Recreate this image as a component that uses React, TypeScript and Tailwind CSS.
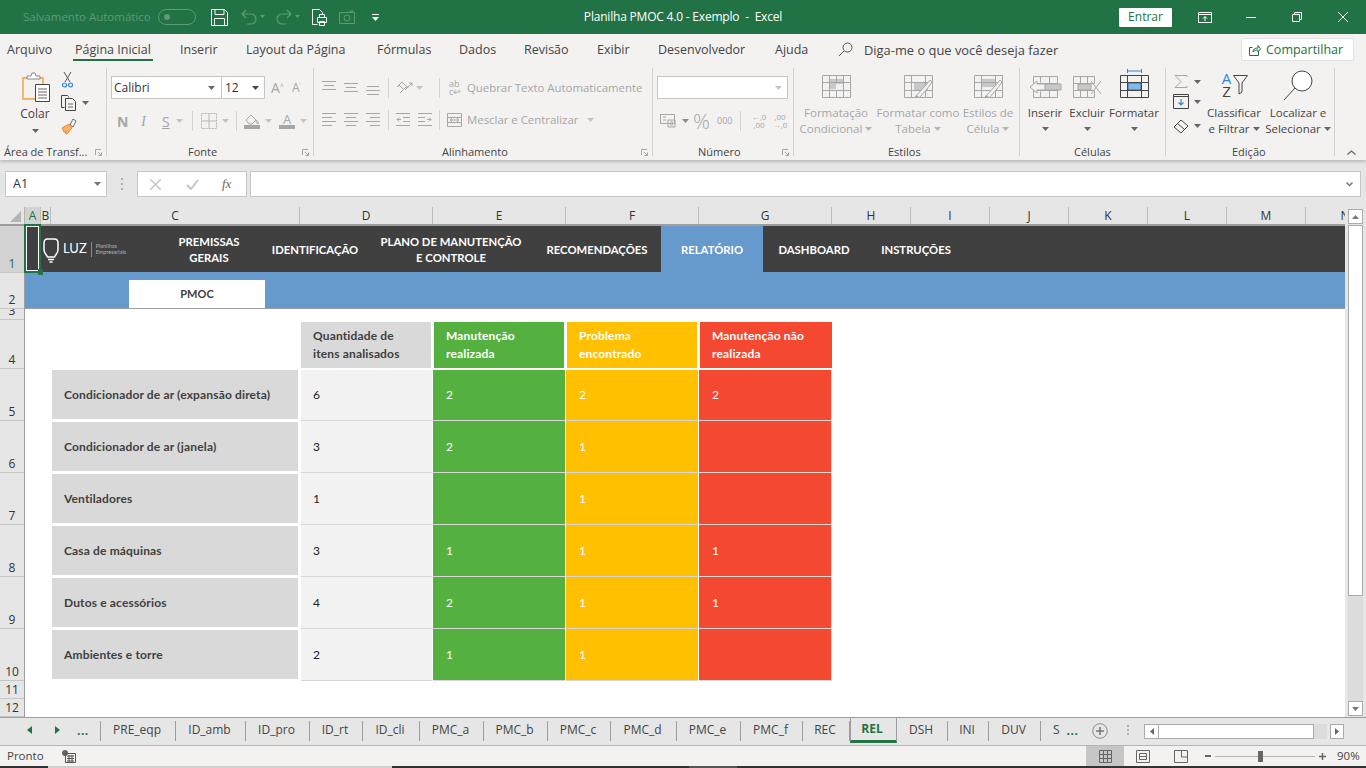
import React from "react";

type SP = { w: number; h: number; className?: string; children?: React.ReactNode };
const S = ({ w, h, className, children }: SP) => (
  <svg width={w} height={h} viewBox={`0 0 ${w} ${h}`} fill="none" className={`shrink-0 ${className ?? ""}`}>
    {children}
  </svg>
);
const Caret = ({ c = "#8a8a8a", className }: { c?: string; className?: string }) => (
  <S w={7} h={4} className={className}>
    <path d="M0 0h7L3.5 4z" fill={c} />
  </S>
);
const Launcher = ({ className }: { className?: string }) => (
  <S w={7} h={7} className={className}>
    <path d="M.5 6V.5H6M3 3l3.5 3.5M6.5 3.5v3h-3" stroke="#a6a6a6" />
  </S>
);
const Sep = ({ className }: { className?: string }) => <div className={`w-px h-[20px] bg-[#d2d2d2] shrink-0 ${className ?? ""}`} />;

const Lines = ({ kind }: { kind: "t" | "m" | "b" | "l" | "c" | "r" | "il" | "ir" }) => {
  const c = "#a6a6a6";
  const set: Record<string, string> = {
    t: "M0 1.5h14M2 5.5h10M0 9.5h14",
    m: "M0 3.5h14M2 7.5h10M0 11.5h14",
    b: "M1 6.5h12M0 10.5h14M1 14.5h12",
    l: "M0 1.5h14M0 5.5h10M0 9.5h14M0 13.5h10",
    c: "M0 1.5h14M2 5.5h10M0 9.5h14M2 13.5h10",
    r: "M0 1.5h14M4 5.5h10M0 9.5h14M4 13.5h10",
    il: "M0 1.5h14M7 5.5h7M7 9.5h7M0 13.5h14M5 7.5H1M3 5.5l-2 2 2 2",
    ir: "M0 1.5h14M0 5.5h7M0 9.5h7M0 13.5h14M9 7.5h4M11 5.5l2 2-2 2",
  };
  return (
    <S w={14} h={16}>
      <path d={set[kind]} stroke={c} />
    </S>
  );
};

const TableIcon = ({ variant }: { variant: "fc" | "ft" | "ec" | "ins" | "del" | "fmt" }) => {
  const g = variant === "fmt" ? "#444" : "#a6a6a6";
  if (variant === "ins")
    return (
      <S w={33} h={22}>
        <path d="M4.500.5h24v21h-24z" stroke="#a6a6a6" />
        <path d="M11.500.5v6M20.500.5v21M11.500 15.500v6M4.500 7.500h24M4.500 14.500h24" stroke="#a6a6a6" />
        <path d="M11 8h21v6H11z" fill="#c8c8c8" stroke="#a6a6a6" />
        <path d="M1 11l7-6v3h8v6H8v3z" fill="#f3f2f1" stroke="#a6a6a6" />
      </S>
    );
  if (variant === "del")
    return (
      <S w={29} h={22}>
        <path d="M.5.5h21v7h-21zM.5 14.500h21v7H.5z" stroke="#a6a6a6" />
        <path d="M7.500.5v7M14.500.5v7M7.500 14.500v7M14.500 14.500v7M.5 7.500v7" stroke="#a6a6a6" />
        <path d="M5 8h13v6H5z" fill="#c8c8c8" stroke="#a6a6a6" />
        <path d="M18 5l10 13M28 5L18 18" stroke="#a6a6a6" />
      </S>
    );
  return (
    <S w={29} h={23}>
      {variant === "fc" && <path d="M7 4h14v5h-7v5H7z" fill="#c8c8c8" />}
      {variant === "ft" && <path d="M10 8h14v7H10z" fill="#c8c8c8" />}
      {variant === "ec" && <path d="M8 4h14v8H8z" fill="#c8c8c8" />}
      {variant === "fmt" && <path d="M8 8h13v7H8z" fill="#82b9ea" stroke="#1f6fb8" />}
      <path d="M.5.5h28v22H.5zM.5 7.500h28M.5 15.500h28M7.500.5v22M21.500.5v22" stroke={g} />
      {variant === "fc" && <path d="M14.500.5v7M14.500 15.500v7" stroke={g} />}
      {(variant === "ft" || variant === "ec") && (
        <g>
          <path d="M12 21l9-10 5-6 2 2-5 7-8 9z" fill="#f3f2f1" stroke="#a6a6a6" />
          <path d="M8 23c2 0 3-1 4-3l3 2c-1 2-4 2-7 1z" fill="#a6a6a6" />
        </g>
      )}
    </S>
  );
};

const BigBtn = ({ w, children, l1, l2, dis }: { w: string; children: React.ReactNode; l1: string; l2?: string; dis?: boolean }) => (
  <div className={`flex flex-col items-center shrink-0 ${w} ${dis ? "text-[#a6a6a6]" : "text-[#444444]"}`}>
    <div className="h-[30px] flex items-end justify-center">{children}</div>
    <div className="h-[16px] mt-[7px] leading-[16px] whitespace-nowrap">{l1}</div>
    <div className="h-[16px] leading-[16px] whitespace-nowrap flex items-center gap-[3px]">
      {l2}
      <Caret c={dis ? "#b5b5b5" : "#666"} />
    </div>
  </div>
);

const GroupLabel = ({ text, launcher, textClass }: { text: string; launcher?: boolean; textClass?: string }) => (
  <div className="absolute bottom-[-4px] left-0 right-0 h-[16px] leading-[16px] flex items-center">
    <span className={`text-[#444444] text-[11px] whitespace-nowrap ${textClass ?? ""}`}>{text}</span>
    {launcher && <Launcher className="absolute right-[4px] top-[5px]" />}
  </div>
);

const ribbonTabs = [
  { t: "Arquivo", w: "w-[68px]" },
  { t: "Página Inicial", w: "w-[105px]", active: true },
  { t: "Inserir", w: "w-[66px]" },
  { t: "Layout da Página", w: "w-[131px]" },
  { t: "Fórmulas", w: "w-[82px]" },
  { t: "Dados", w: "w-[65px]" },
  { t: "Revisão", w: "w-[73px]" },
  { t: "Exibir", w: "w-[61px]" },
  { t: "Desenvolvedor", w: "w-[117px]" },
  { t: "Ajuda", w: "w-[63px]" },
];

const cols = [
  { t: "A", w: "w-[16px]", active: true },
  { t: "B", w: "w-[10px]" },
  { t: "C", w: "w-[249px]" },
  { t: "D", w: "w-[133px]" },
  { t: "E", w: "w-[133px]" },
  { t: "F", w: "w-[133px]" },
  { t: "G", w: "w-[133px]" },
  { t: "H", w: "w-[79px]" },
  { t: "I", w: "w-[79px]" },
  { t: "J", w: "w-[79px]" },
  { t: "K", w: "w-[79px]" },
  { t: "L", w: "w-[79px]" },
  { t: "M", w: "w-[79px]" },
  { t: "N", w: "w-[79px]" },
];

const rowsH = [
  { t: "1", h: "h-[47px]", active: true },
  { t: "2", h: "h-[36px]" },
  { t: "3", h: "h-[11px]" },
  { t: "4", h: "h-[49px]" },
  { t: "5", h: "h-[52px]" },
  { t: "6", h: "h-[52px]" },
  { t: "7", h: "h-[52px]" },
  { t: "8", h: "h-[52px]" },
  { t: "9", h: "h-[52px]" },
  { t: "10", h: "h-[52px]" },
  { t: "11", h: "h-[18px]" },
  { t: "12", h: "h-[18px]" },
];

const data: [string, string, string, string, string][] = [
  ["Condicionador de ar (expansão direta)", "6", "2", "2", "2"],
  ["Condicionador de ar (janela)", "3", "2", "1", ""],
  ["Ventiladores", "1", "", "1", ""],
  ["Casa de máquinas", "3", "1", "1", "1"],
  ["Dutos e acessórios", "4", "2", "1", "1"],
  ["Ambientes e torre", "2", "1", "1", ""],
];

const tabs = [
  { t: "PRE_eqp", w: "w-[75px]" },
  { t: "ID_amb", w: "w-[70px]" },
  { t: "ID_pro", w: "w-[64px]" },
  { t: "ID_rt", w: "w-[53px]" },
  { t: "ID_cli", w: "w-[57px]" },
  { t: "PMC_a", w: "w-[64px]" },
  { t: "PMC_b", w: "w-[64px]" },
  { t: "PMC_c", w: "w-[63px]" },
  { t: "PMC_d", w: "w-[66px]" },
  { t: "PMC_e", w: "w-[64px]" },
  { t: "PMC_f", w: "w-[62px]" },
  { t: "REC", w: "w-[47px]" },
];
const tabs2 = [
  { t: "DSH", w: "w-[51px]" },
  { t: "INI", w: "w-[41px]" },
  { t: "DUV", w: "w-[52px]" },
];

const NavItem = ({ w, children, active }: { w: string; children: React.ReactNode; active?: boolean }) => (
  <div className={`${w} shrink-0 h-full flex items-center justify-center text-center leading-[16px] pt-[2px] text-[11.300px] ${active ? "bg-[#6699cc]" : ""}`}>
    <span>{children}</span>
  </div>
);

export default function App() {
  return (
    <div className="w-[1366px] h-[768px] overflow-hidden flex flex-col bg-[#e6e6e6] text-[12px] text-[#444444] font-['Open_Sans','Noto_Sans',sans-serif]">
      {/* Title bar */}
      <div className="h-[34px] bg-[#217346] flex items-center shrink-0">
        <div className="w-[500px] flex items-center pl-[23px]">
          <span className="text-[11.500px] text-[#5c9a7a] w-[135px] whitespace-nowrap">Salvamento Automático</span>
          <div className="w-[38px] h-[16px] rounded-full border border-[#5c9a7a] flex items-center pl-[5px]">
            <div className="w-[6px] h-[6px] rounded-full bg-[#5c9a7a]" />
          </div>
          <S w={17} h={17} className="ml-[15px]">
            <path d="M.5.5h13l3 3v13H.5zM4 .5v5h9v-5M3.500 16.500v-7h10v7" stroke="#fff" />
          </S>
          <S w={24} h={16} className="ml-[13px]">
            <path d="M1 5h9a5 5 0 010 10H6M1 5l4-4M1 5l4 4" stroke="#5c9a7a" strokeWidth="1.200" />
            <path d="M19 6h5l-2.500 3z" fill="#5c9a7a" />
          </S>
          <S w={24} h={16} className="ml-[11px]">
            <path d="M15 5H6a5 5 0 000 10h4M15 5l-4-4M15 5l-4 4" stroke="#5c9a7a" strokeWidth="1.200" />
            <path d="M19 6h5l-2.500 3z" fill="#5c9a7a" />
          </S>
          <S w={15} h={17} className="ml-[12px]">
            <path d="M.5.5h7l3 3v4M.5.5v15h5" stroke="#fff" />
            <path d="M5.500 8.500h9v5h-9zM7.500 8.500v-3h5v3M7.500 12.500h5v4h-5z" stroke="#fff" fill="#217346" />
          </S>
          <S w={16} h={14} className="ml-[12px]">
            <path d="M.5 2.500h15v11H.5z" stroke="#5c9a7a" />
            <circle cx="8" cy="8" r="3" stroke="#5c9a7a" />
            <path d="M11 2.500V1h3v1.500" stroke="#5c9a7a" />
          </S>
          <S w={7} h={7} className="ml-[17px]">
            <path d="M0 .5h7" stroke="#fff" />
            <path d="M0 3h7L3.500 7z" fill="#fff" />
          </S>
        </div>
        <div className="w-[366px] text-center text-white text-[12px] tracking-[-0.2px] whitespace-pre">Planilha PMOC 4.0 - Exemplo  -  Excel</div>
        <div className="w-[500px] flex items-center pl-[253px]">
          <div className="w-[53px] h-[19px] bg-white rounded-[1px] text-[#217346] flex items-center justify-center text-[12px]">Entrar</div>
          <S w={14} h={11} className="ml-[26px]">
            <path d="M.5.5h13v10H.5zM.5 2.500h13M7 9V4.500M5 6.500l2-2 2 2" stroke="#fff" />
          </S>
          <S w={10} h={1} className="ml-[34px]">
            <path d="M0 .5h10" stroke="#fff" />
          </S>
          <S w={10} h={10} className="ml-[36px]">
            <path d="M.5 2.500h7v7h-7zM2.500 2.500v-2h7v7h-2" stroke="#fff" />
          </S>
          <S w={10} h={10} className="ml-[36px]">
            <path d="M0 0l10 10M10 0L0 10" stroke="#fff" />
          </S>
        </div>
      </div>

      {/* Ribbon tabs */}
      <div className="h-[30px] bg-[#f3f2f1] flex items-stretch pl-[7px] shrink-0 text-[12.500px]">
        {ribbonTabs.map((t) => (
          <div key={t.t} className={`${t.w} shrink-0 relative pt-[7px] leading-[18px] whitespace-nowrap`}>
            {t.t}
            {t.active && <div className="absolute left-[-2px] w-[80px] top-[25px] h-[2px] bg-[#217346]" />}
          </div>
        ))}
        <S w={15} h={15} className="ml-[0px] mt-[8px]">
          <circle cx="9.500" cy="5.500" r="4.500" stroke="#555" />
          <path d="M6 9l-5 5" stroke="#555" />
        </S>
        <span className="ml-[11px] pt-[7px] leading-[18px] whitespace-nowrap w-[377px] text-[12.900px]">Diga-me o que você deseja fazer</span>
        <div className="h-[23px] w-[113px] mt-[4px] pt-px bg-white border border-[#e3e3e3] rounded-[2px] flex items-center pl-[7px] gap-[5px] text-[#217346] text-[12.500px] font-medium">
          <S w={12} h={12}>
            <path d="M9.500 7v4.500H.5v-8h3M4 8c0-3 2-4 5-4V1.500L11.500 5 9 8V6C7 6 5 6.500 4 8z" stroke="#217346" />
          </S>
          Compartilhar
        </div>
      </div>

      {/* Ribbon */}
      <div className="h-[96px] bg-[#f3f2f1] flex shrink-0 pt-[4px] pb-[4px] text-[11.500px] shadow-[0_2px_3px_rgba(0,0,0,0.18)] relative">
        {/* Clipboard */}
        <div className="w-[107px] shrink-0 relative border-r border-[#d2d2d2] flex h-[88px]">
          <div className="ml-[8px] w-[54px] flex flex-col items-center">
            <S w={28} h={30} className="mt-[4px] ml-[2px]">
              <path d="M1 6h20v21H1z" stroke="#f0a13c" strokeWidth="1.400" />
              <path d="M5 7V4h4l1-3h3l1 3h4v3z" fill="#fff" stroke="#8a8a8a" />
              <path d="M13.500 12.500h14v17h-14z" fill="#fff" stroke="#444" />
              <path d="M16 17h9M16 20h9M16 23h9M16 26h9" stroke="#666" />
            </S>
            <span className="mt-[4px] leading-[16px] text-[12px]">Colar</span>
            <Caret c="#666" className="mt-[7px]" />
          </div>
          <div className="flex flex-col items-start ml-[-1px]">
            <S w={11} h={16} className="mt-[4px] ml-[1px]">
              <path d="M2 0l6 10M9 0L3 10" stroke="#555" />
              <circle cx="2.500" cy="13" r="2" stroke="#2b88d8" strokeWidth="1.200" />
              <circle cx="8.500" cy="13" r="2" stroke="#2b88d8" strokeWidth="1.200" />
            </S>
            <div className="flex items-center mt-[7px]">
              <S w={16} h={16}>
                <path d="M.5.5h6l1 1v1M.5.5v12h3" stroke="#444" />
                <path d="M4.500 3.500h7l3 3v9h-10z" fill="#f3f2f1" stroke="#444" />
                <path d="M7 9h5M7 12h5" stroke="#666" />
              </S>
              <Caret c="#666" className="ml-[5px]" />
            </div>
            <S w={16} h={17} className="mt-[7px]">
              <path d="M9 7l3-6 3 2-3 6z" fill="#fff" stroke="#666" />
              <path d="M1 10l7-4 3 4-5 6-2-1 1-2-2 1z" fill="#f6b26b" stroke="#e58a2c" />
            </S>
          </div>
          <GroupLabel text="Área de Transf..." textClass="ml-[4px]" launcher />
        </div>

        {/* Fonte */}
        <div className="w-[207px] shrink-0 relative border-r border-[#d2d2d2] h-[88px] flex flex-col pl-[4px] pt-[8px]">
          <div className="flex items-center h-[23px]">
            <div className="w-[111px] h-[23px] bg-white border border-[#c6c6c6] flex items-center pl-[2px] text-[12px] justify-between pr-[6px] text-[#333]">
              Calibri
              <Caret c="#666" />
            </div>
            <div className="w-[43px] h-[23px] bg-white border border-l-0 border-[#c6c6c6] flex items-center pl-[3px] text-[12px] justify-between pr-[5px] text-[#333]">
              12
              <Caret c="#444" />
            </div>
            <div className="ml-[6px] w-[20px] text-[14px] leading-[20px] text-[#a6a6a6]">A<sup className="text-[7px]">^</sup></div>
            <div className="ml-[1px] w-[20px] text-[12px] leading-[20px] text-[#a6a6a6]">A<sup className="text-[7px]">˅</sup></div>
          </div>
          <div className="flex items-center h-[22px] mt-[11px] text-[#a6a6a6] text-[14px]">
            <span className="ml-[6px] w-[24px] font-bold text-[#a6a6a6]">N</span>
            <span className="w-[21px] italic font-['Liberation_Serif',serif] text-[15px]">I</span>
            <span className="underline w-[14px]">S</span>
            <Caret c="#c4c4c4" className="ml-[0px]" />
            <Sep className="ml-[9px]" />
            <S w={16} h={16} className="ml-[8px]">
              <path d="M.5.5h15v15H.5z" stroke="#b5b5b5" strokeDasharray="2 1" />
              <path d="M8 1v14M1 8h14" stroke="#b5b5b5" />
            </S>
            <Caret c="#c4c4c4" className="ml-[5px]" />
            <Sep className="ml-[7px]" />
            <div className="ml-[7px] w-[16px] flex flex-col items-center">
              <S w={16} h={11}>
                <path d="M2 6l5-5 5 5-4 4H5zM12 6c2 1 3 3 2 4-1 0-2-2-2-4z" stroke="#a6a6a6" />
              </S>
              <div className="w-[16px] h-[4px] bg-[#a6a6a6]" />
            </div>
            <Caret c="#c4c4c4" className="ml-[5px]" />
            <div className="ml-[7px] w-[16px] flex flex-col items-center leading-[12px] text-[13px]">
              A
              <div className="w-[16px] h-[4px] bg-[#a6a6a6]" />
            </div>
            <Caret c="#c4c4c4" className="ml-[5px]" />
          </div>
          <GroupLabel text="Fonte" textClass="ml-[81px]" launcher />
        </div>

        {/* Alinhamento */}
        <div className="w-[339px] shrink-0 relative border-r border-[#d2d2d2] h-[88px] flex flex-col pl-[8px] pt-[10px] text-[#a6a6a6]">
          <div className="flex items-center h-[20px]">
            <Lines kind="t" />
            <div className="ml-[8px]"><Lines kind="m" /></div>
            <div className="ml-[8px]"><Lines kind="b" /></div>
            <Sep className="ml-[8px]" />
            <S w={17} h={16} className="ml-[7px]">
              <path d="M1 7l5-5 5 5M3 5l4 4M4 13l6-6h3M13 3l3 0v3M16 3L9 10" stroke="#a6a6a6" />
            </S>
            <Caret c="#c4c4c4" className="ml-[3px]" />
            <Sep className="ml-[16px]" />
            <span className="ml-[9px] text-[9px] leading-[8px] w-[14px]">ab<br />c↩</span>
            <span className="ml-[4px] whitespace-nowrap text-[11.400px]">Quebrar Texto Automaticamente</span>
          </div>
          <div className="flex items-center h-[20px] mt-[12px]">
            <Lines kind="l" />
            <div className="ml-[8px]"><Lines kind="c" /></div>
            <div className="ml-[8px]"><Lines kind="r" /></div>
            <Sep className="ml-[8px]" />
            <div className="ml-[7px]"><Lines kind="il" /></div>
            <div className="ml-[8px]"><Lines kind="ir" /></div>
            <Sep className="ml-[7px]" />
            <S w={15} h={14} className="ml-[7px]">
              <path d="M.5.5h14v13H.5zM.5 4.500h14M.5 9.500h14M3 7h9M3 7l2-2M3 7l2 2M12 7l-2-2M12 7l-2 2" stroke="#a6a6a6" />
            </S>
            <span className="ml-[5px] whitespace-nowrap w-[120px] text-[11.400px]">Mesclar e Centralizar</span>
            <Caret c="#c4c4c4" />
          </div>
          <GroupLabel text="Alinhamento" textClass="ml-[128px]" launcher />
        </div>

        {/* Numero */}
        <div className="w-[141px] shrink-0 relative border-r border-[#d2d2d2] h-[88px] flex flex-col pl-[4px] pt-[8px] text-[#a6a6a6]">
          <div className="w-[131px] h-[23px] bg-white border border-[#c6c6c6] flex items-center justify-end pr-[5px]">
            <Caret c="#c4c4c4" />
          </div>
          <div className="flex items-center h-[22px] mt-[11px]">
            <S w={16} h={14} className="ml-[3px]">
              <path d="M.5.5h14v9H.5zM8 6h7v7H8z" stroke="#a6a6a6" fill="#f3f2f1" />
              <path d="M3 3h3M3 6h3M10 8h3M10 11h3" stroke="#a6a6a6" />
            </S>
            <Caret c="#8a8a8a" className="ml-[6px]" />
            <span className="ml-[4px] text-[21px] leading-[20px] w-[24px] font-light">%</span>
            <span className="text-[9px] w-[22px]">000</span>
            <Sep className="ml-[1px]" />
            <span className="ml-[7px] w-[22px] text-[8px] leading-[8px] text-center">←,0<br />,00</span>
            <span className="w-[20px] text-[8px] leading-[8px] text-center">,00<br />→,0</span>
          </div>
          <GroupLabel text="Número" textClass="ml-[45px]" launcher />
        </div>

        {/* Estilos */}
        <div className="w-[226px] shrink-0 relative border-r border-[#d2d2d2] h-[88px] flex">
          <BigBtn w="w-[80px] ml-[2px]" l1="Formatação" l2="Condicional" dis><TableIcon variant="fc" /></BigBtn>
          <BigBtn w="w-[84px]" l1="Formatar como" l2="Tabela" dis><TableIcon variant="ft" /></BigBtn>
          <BigBtn w="w-[56px]" l1="Estilos de" l2="Célula" dis><TableIcon variant="ec" /></BigBtn>
          <GroupLabel text="Estilos" textClass="ml-[94px]" />
        </div>

        {/* Celulas */}
        <div className="w-[146px] shrink-0 relative border-r border-[#d2d2d2] h-[88px] flex">
          <BigBtn w="w-[50px]" l1="Inserir" l2="" ><TableIcon variant="ins" /></BigBtn>
          <BigBtn w="w-[42px] ml-[-4px]" l1="Excluir" l2="" ><TableIcon variant="del" /></BigBtn>
          <BigBtn w="w-[48px] ml-[2px]" l1="Formatar" l2="" >
            <div className="flex flex-col items-center">
              <S w={15} h={4} className="mb-[2px]">
                <path d="M.5 0v4M14.500 0v4M.5 2h14" stroke="#2b88d8" />
              </S>
              <TableIcon variant="fmt" />
            </div>
          </BigBtn>
          <GroupLabel text="Células" textClass="ml-[54px]" />
        </div>

        {/* Edicao */}
        <div className="w-[169px] shrink-0 relative border-r border-[#d2d2d2] h-[88px] flex">
          <div className="w-[42px] ml-[7px] flex flex-col items-start">
            <div className="flex items-center mt-[7px] h-[13px]">
              <S w={14} h={13} className="ml-[1px]">
                <path d="M13 2V.5H1L7 6.500 1 12.500h12V11" stroke="#a6a6a6" />
              </S>
              <Caret c="#666" className="ml-[6px]" />
            </div>
            <div className="flex items-center mt-[6px]">
              <S w={16} h={15}>
                <path d="M.5.5h15v14H.5z" stroke="#444" />
                <path d="M.5 2.500h15" stroke="#444" />
                <path d="M8 5v6M5.500 8.500L8 11l2.500-2.500" stroke="#2b88d8" strokeWidth="1.200" />
              </S>
              <Caret c="#666" className="ml-[5px]" />
            </div>
            <div className="flex items-center mt-[10px]">
              <S w={16} h={14}>
                <path d="M1 8l7-7 7 6-7 7zM4.500 4.500l7 6" stroke="#444" />
              </S>
              <Caret c="#666" className="ml-[5px]" />
            </div>
          </div>
          <BigBtn w="w-[62px] ml-[-12px]" l1="Classificar" l2="e Filtrar">
            <div className="flex items-end h-[29px] mb-[-1px]">
              <div className="flex flex-col items-center leading-[13px] text-[15px] w-[13px] mb-[1px]">
                <span className="text-[#2b88d8]">A</span>
                <span className="text-[#444]">Z</span>
              </div>
              <S w={15} h={20} className="mb-[4px]">
                <path d="M.5 .5h14L9 8v9l-3 2V8z" stroke="#444" />
              </S>
            </div>
          </BigBtn>
          <BigBtn w="w-[62px] ml-[2px]" l1="Localizar e" l2="Selecionar">
            <S w={30} h={31} className="mb-[-3px]">
              <circle cx="19" cy="11" r="10" stroke="#444" fill="#fff" />
              <path d="M12 18L1 30" stroke="#444" />
            </S>
          </BigBtn>
          <GroupLabel text="Edição" textClass="ml-[66px]" />
        </div>
        <S w={9} h={5} className="ml-[12px] mt-[82px]">
          <path d="M.5 4.500l4-3.500 4 3.500" stroke="#666" strokeWidth="1.300" />
        </S>
      </div>

      {/* Formula bar */}
      <div className="h-[47px] flex items-start pl-[5px] pt-[11px] shrink-0">
        <div className="w-[102px] h-[26px] bg-white border border-[#c6c6c6] flex items-center justify-between pl-[7px] pr-[5px] text-[12.500px] text-[#333]">
          A1
          <Caret c="#777" />
        </div>
        <div className="w-[30px] h-[26px] flex flex-col items-center justify-center gap-[3px]">
          <div className="w-[2px] h-[2px] bg-[#b0b0b0]" />
          <div className="w-[2px] h-[2px] bg-[#b0b0b0]" />
          <div className="w-[2px] h-[2px] bg-[#b0b0b0]" />
        </div>
        <div className="w-[110px] h-[26px] bg-white border border-[#c6c6c6] flex items-center">
          <S w={11} h={11} className="ml-[12px]">
            <path d="M0 0l11 11M11 0L0 11" stroke="#c6c6c6" strokeWidth="1.500" />
          </S>
          <S w={13} h={11} className="ml-[25px]">
            <path d="M1 6l4 4 7-9" stroke="#c6c6c6" strokeWidth="2" />
          </S>
          <span className="ml-[23px] italic font-['Liberation_Serif',serif] text-[13px] text-[#666]">fx</span>
        </div>
        <div className="ml-[3px] w-[1111px] h-[26px] bg-white border border-[#c6c6c6] flex items-center justify-end pr-[7px]">
          <S w={7} h={5}>
            <path d="M.5.5l3 3 3-3" stroke="#777" strokeWidth="1.500" />
          </S>
        </div>
      </div>

      {/* Grid + scrollbar */}
      <div className="flex h-[510px] shrink-0 font-['Lato','Open_Sans',sans-serif]">
        <div className="w-[1345px] shrink-0 flex flex-col relative overflow-hidden">
          <div className="h-[19px] flex shrink-0 border-b-2 border-[#9e9e9e] font-['Open_Sans',sans-serif] text-[12px] text-[#333]">
            <div className="w-[25px] shrink-0 bg-[#e6e6e6] border-r border-[#b5b5b5] flex items-end justify-end pr-[3px] pb-[2px]">
              <S w={11} h={11}>
                <path d="M11 0v11H0z" fill="#b5b5b5" />
              </S>
            </div>
            {cols.map((c) => (
              <div key={c.t} className={`${c.w} shrink-0 flex items-center justify-center border-r border-[#bdbdbd] overflow-hidden ${c.active ? "bg-[#d2d2d2] text-[#217346]" : ""}`}>
                {c.t}
              </div>
            ))}
          </div>
          <div className="flex flex-1 min-h-0">
            <div className="w-[25px] shrink-0 flex flex-col font-['Open_Sans',sans-serif] text-[12px] text-[#333] border-r border-[#9e9e9e]">
              {rowsH.map((r) => (
                <div key={r.t} className={`${r.h} shrink-0 flex items-end justify-center leading-[15px] pb-px overflow-hidden border-b border-[#c6c6c6] ${r.active ? "bg-[#d2d2d2] text-[#217346]" : ""}`}>
                  {r.t}
                </div>
              ))}
            </div>
            <div className="flex-1 bg-white flex flex-col font-bold text-[12px] tracking-[0.150px]">
              <div className="h-[46px] bg-[#404040] text-white flex shrink-0 tracking-normal">
                <div className="w-[124px] shrink-0 flex items-center pl-[18px]">
                  <S w={16} h={26} className="mt-[3px]">
                    <path d="M4.500 1h7C14 1 15 3 15 5v7c0 3-2.500 4.500-3.500 7h-7C3.500 16.500 1 15 1 12V5c0-2 1-4 3.500-4z" stroke="#fff" strokeWidth="1.500" />
                    <path d="M5 21.500h6M6.500 24h3" stroke="#fff" strokeWidth="1.400" />
                  </S>
                  <span className="ml-[4px] text-[13px] font-normal">LUZ</span>
                  <div className="ml-[4px] w-px h-[15px] bg-[#8a8a8a]" />
                  <span className="ml-[4px] text-[5.500px] leading-[6px] font-normal text-[#b5b5b5] whitespace-nowrap">Planilhas<br />Empresariais</span>
                </div>
                <NavItem w="w-[120px]">PREMISSAS<br />GERAIS</NavItem>
                <NavItem w="w-[92px]">IDENTIFICAÇÃO</NavItem>
                <NavItem w="w-[180px]">PLANO DE MANUTENÇÃO<br />E CONTROLE</NavItem>
                <NavItem w="w-[112px]">RECOMENDAÇÕES</NavItem>
                <div className="w-[8px] shrink-0" />
                <NavItem w="w-[102px]" active>RELATÓRIO</NavItem>
                <NavItem w="w-[102px]">DASHBOARD</NavItem>
                <NavItem w="w-[102px]">INSTRUÇÕES</NavItem>
              </div>
              <div className="h-[37px] bg-[#6699cc] border-b border-[#9e9e9e] flex items-end pl-[104px] shrink-0 text-[11px] tracking-normal">
                <div className="w-[136px] h-[28px] pt-px bg-white text-[#404040] flex items-center justify-center">PMOC</div>
              </div>
              {/* Table */}
              <div className="grid grid-cols-[26px_248px_133px_133px_133px_134px] mt-[11px] w-max">
                <div className="col-span-2" />
                <div className="h-[49px] pt-[2px] pb-[1px] pl-[2px] pr-[1px]">
                  <div className="h-full bg-[#d9d9d9] text-[#404040] pl-[12px] flex items-center leading-[18px]"><span>Quantidade de<br />itens analisados</span></div>
                </div>
                <div className="h-[49px] pt-[2px] pb-[1px] pl-[2px] pr-[1px]">
                  <div className="h-full bg-[#55b13f] text-white pl-[12px] flex items-center leading-[18px]"><span>Manutenção<br />realizada</span></div>
                </div>
                <div className="h-[49px] pt-[2px] pb-[1px] pl-[2px] pr-[1px]">
                  <div className="h-full bg-[#ffc000] text-white pl-[12px] flex items-center leading-[18px]"><span>Problema<br />encontrado</span></div>
                </div>
                <div className="h-[49px] pt-[2px] pb-[1px] pl-[2px]">
                  <div className="h-full bg-[#f44830] text-white pl-[12px] flex items-center leading-[18px]"><span>Manutenção não<br />realizada</span></div>
                </div>
                {data.map((r, i) => (
                  <React.Fragment key={r[0]}>
                    <div />
                    <div className="h-[52px] pl-[1px] pr-[1px] pt-[1px] pb-[2px]">
                      <div className="h-full bg-[#d9d9d9] text-[#404040] pl-[12px] flex items-center">{r[0]}</div>
                    </div>
                    <div className={`h-[52px] pl-[2px] ${i === 0 ? "pt-[1px]" : ""}`}>
                      <div className="h-full bg-[#f2f2f2] border-b border-[#d6d6d6] pl-[12px] flex items-center font-normal text-[#222]">{r[1]}</div>
                    </div>
                    <div className={`h-[52px] pl-[1px] ${i === 0 ? "pt-[1px]" : ""}`}>
                      <div className="h-full bg-[#55b13f] border-b border-[#d6d6d6] pl-[13px] flex items-center font-normal text-white">{r[2]}</div>
                    </div>
                    <div className={`h-[52px] pl-[1px] ${i === 0 ? "pt-[1px]" : ""}`}>
                      <div className="h-full bg-[#ffc000] border-b border-[#d6d6d6] pl-[13px] flex items-center font-normal text-white">{r[3]}</div>
                    </div>
                    <div className={`h-[52px] pl-[1px] ${i === 0 ? "pt-[1px]" : ""}`}>
                      <div className="h-full bg-[#f44830] border-b border-r border-[#d6d6d6] pl-[13px] flex items-center font-normal text-white">{r[4]}</div>
                    </div>
                  </React.Fragment>
                ))}
              </div>
            </div>
          </div>
          {/* Selection */}
          <div className="absolute left-[24px] top-[17px] w-[17px] h-[49px] border-2 border-[#217346] shadow-[inset_0_0_0_1px_#ffffff]" />
          <div className="absolute left-[38px] top-[62px] w-[5px] h-[6px] bg-[#217346]" />
        </div>
        <div className="w-[21px] shrink-0 flex flex-col items-start pl-[3px] pt-[2px]">
          <div className="w-[15px] h-[15px] bg-white border border-[#ababab] flex items-center justify-center">
            <S w={7} h={4}><path d="M0 4h7L3.500 0z" fill="#777" /></S>
          </div>
          <div className="w-[15px] h-[371px] mt-px bg-white border border-[#ababab]" />
          <div className="w-[15px] h-[105px] bg-[#dcdcdc]" />
          <div className="w-[15px] h-[15px] bg-white border border-[#ababab] flex items-center justify-center">
            <Caret c="#777" />
          </div>
        </div>
      </div>

      {/* Sheet tabs */}
      <div className="h-[29px] shrink-0 border-t border-[#9e9e9e] border-b border-b-[#b5b5b5] flex items-start text-[12px] text-[#444]">
        <div className="w-[100px] h-[24px] flex items-center shrink-0">
          <S w={5} h={8} className="ml-[27px]"><path d="M5 0v8L0 4z" fill="#217346" /></S>
          <S w={5} h={8} className="ml-[23px]"><path d="M0 0v8l5-4z" fill="#217346" /></S>
          <span className="ml-[17px] font-bold text-[#217346] tracking-[0.500px] leading-[14px] pt-[2px]">...</span>
        </div>
        <div className="w-px h-[20px] mt-[3px] bg-[#9e9e9e] shrink-0" />
        {tabs.map((t) => (
          <div key={t.t} className={`${t.w} h-[24px] shrink-0 flex items-center justify-center pr-[3px] relative`}>
            {t.t}
            <div className="absolute right-0 top-[3px] w-px h-[20px] bg-[#9e9e9e]" />
          </div>
        ))}
        <div className="w-[47px] h-[25px] shrink-0 border-x border-[#9e9e9e] border-b-[3px] border-b-[#217346] flex items-center justify-center pr-[3px] font-bold text-[#217346]">REL</div>
        {tabs2.map((t) => (
          <div key={t.t} className={`${t.w} h-[24px] shrink-0 flex items-center justify-center pr-[3px] relative`}>
            {t.t}
            <div className="absolute right-0 top-[3px] w-px h-[20px] bg-[#9e9e9e]" />
          </div>
        ))}
        <div className="h-[24px] flex items-center pl-[12px] shrink-0">
          S
          <span className="ml-[7px] font-bold text-[#217346] tracking-[0.500px] pt-[2px]">...</span>
          <S w={16} h={16} className="ml-[14px] mt-[1px]">
            <circle cx="8" cy="8" r="7.300" stroke="#8a8a8a" />
            <path d="M8 4v8M4 8h8" stroke="#777" strokeWidth="1.600" />
          </S>
          <div className="ml-[19px] flex flex-col gap-[2px]">
            <div className="w-[2px] h-[2px] bg-[#b0b0b0]" />
            <div className="w-[2px] h-[2px] bg-[#b0b0b0]" />
            <div className="w-[2px] h-[2px] bg-[#b0b0b0]" />
          </div>
          <div className="ml-[15px] flex h-[15px] items-stretch mt-[2px]">
            <div className="w-[15px] bg-white border border-[#ababab] flex items-center justify-center">
              <S w={4} h={7}><path d="M4 0v7L0 3.500z" fill="#666" /></S>
            </div>
            <div className="w-[155px] bg-white border border-[#ababab] border-l-0" />
            <div className="w-[13px] bg-[#dcdcdc]" />
            <div className="w-[14px] ml-[3px] bg-white border border-[#ababab] flex items-center justify-center">
              <S w={4} h={7}><path d="M0 0v7l4-3.500z" fill="#666" /></S>
            </div>
          </div>
        </div>
      </div>

      {/* Status */}
      <div className="h-[20px] shrink-0 bg-[#f3f2f1] flex items-center text-[11.500px] text-[#444]">
        <span className="ml-[7px] w-[55px]">Pronto</span>
        <S w={14} h={13}>
          <circle cx="3" cy="3" r="3" fill="#666" />
          <path d="M3.500 3.500h10v9h-10zM5 6h7M5 8.500h7M5 11h7M7 5v7M10 5v7" stroke="#555" />
        </S>
        <div className="ml-[1010px] w-[38px] h-[20px] bg-[#c6c6c6] flex items-center justify-center">
          <S w={13} h={13}><path d="M.5.5h12v12H.5zM.5 4.500h12M.5 8.500h12M4.500.5v12M8.500.5v12" stroke="#666" /></S>
        </div>
        <S w={14} h={13} className="ml-[12px]"><path d="M.5.5h13v12H.5zM3.500 3.500h7v6h-7zM3.500 6.500h7" stroke="#666" /></S>
        <S w={14} h={13} className="ml-[24px]"><path d="M.5.5h13v12H.5zM7.500.5v6.500h6" stroke="#666" /></S>
        <S w={6} h={2} className="ml-[17px]"><path d="M0 1h6" stroke="#666" strokeWidth="2" /></S>
        <div className="ml-[4px] w-[100px] h-px bg-[#b0b0b0] relative shrink-0">
          <div className="absolute left-[43px] top-[-5px] w-[5px] h-[11px] bg-[#666]" />
        </div>
        <S w={7} h={7} className="ml-[4px]"><path d="M0 3.500h7M3.500 0v7" stroke="#666" strokeWidth="1.500" /></S>
        <span className="ml-[11px] text-[11.500px]">90%</span>
      </div>
      <div className="h-[2px] shrink-0 flex bg-[#333]">
        <div className="w-[48px]" />
        <div className="w-[344px] bg-[#d0d0d0]" />
        <div className="w-[297px]" />
        <div className="w-[48px] bg-[#555]" />
      </div>
    </div>
  );
}
